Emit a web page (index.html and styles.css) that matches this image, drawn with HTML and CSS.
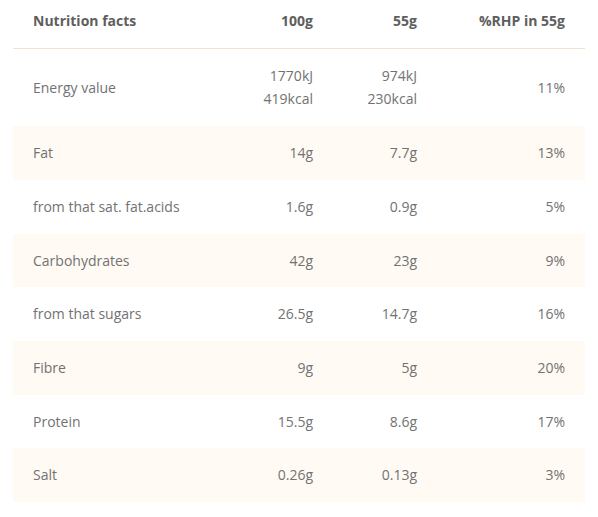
FILE: index.html
```html
<!DOCTYPE html>
<html lang="en">
<head>
<meta charset="utf-8">
<title>Nutrition facts</title>
<link rel="stylesheet" href="styles.css">
</head>
<body>
<div class="nutri">
  <div class="row head">
    <div class="c-label">Nutrition facts</div>
    <div class="c-num">100g</div>
    <div class="c-num">55g</div>
    <div class="c-num">%RHP in 55g</div>
  </div>
  <div class="row">
    <div class="c-label">Energy value</div>
    <div class="c-num">1770kJ<br>419kcal</div>
    <div class="c-num">974kJ<br>230kcal</div>
    <div class="c-num">11%</div>
  </div>
  <div class="row alt">
    <div class="c-label">Fat</div>
    <div class="c-num">14g</div>
    <div class="c-num">7.7g</div>
    <div class="c-num">13%</div>
  </div>
  <div class="row">
    <div class="c-label">from that sat. fat.acids</div>
    <div class="c-num">1.6g</div>
    <div class="c-num">0.9g</div>
    <div class="c-num">5%</div>
  </div>
  <div class="row alt">
    <div class="c-label">Carbohydrates</div>
    <div class="c-num">42g</div>
    <div class="c-num">23g</div>
    <div class="c-num">9%</div>
  </div>
  <div class="row">
    <div class="c-label">from that sugars</div>
    <div class="c-num">26.5g</div>
    <div class="c-num">14.7g</div>
    <div class="c-num">16%</div>
  </div>
  <div class="row alt">
    <div class="c-label">Fibre</div>
    <div class="c-num">9g</div>
    <div class="c-num">5g</div>
    <div class="c-num">20%</div>
  </div>
  <div class="row">
    <div class="c-label">Protein</div>
    <div class="c-num">15.5g</div>
    <div class="c-num">8.6g</div>
    <div class="c-num">17%</div>
  </div>
  <div class="row alt">
    <div class="c-label">Salt</div>
    <div class="c-num">0.26g</div>
    <div class="c-num">0.13g</div>
    <div class="c-num">3%</div>
  </div>
</div>
</body>
</html>
```
FILE: styles.css
```css
html, body {
  margin: 0;
  padding: 0;
  background: #ffffff;
}
body {
  font-family: "Open Sans", "DejaVu Sans", sans-serif;
  font-size: 14px;
  color: #727272;
}
.nutri {
  margin: 0 13px;
  width: 572px;
}
.row {
  display: grid;
  grid-template-columns: 1fr 104px 104px 148px;
  align-items: center;
  padding: 15px 20px;
  line-height: 23.7px;
}
.row.head {
  padding: 9px 20px 15px;
  font-weight: 700;
  color: #5e5e5e;
  border-bottom: 1px solid #f1e2cc;
}
.row.alt {
  background: #fffaf4;
}
.c-num {
  text-align: right;
}
```
